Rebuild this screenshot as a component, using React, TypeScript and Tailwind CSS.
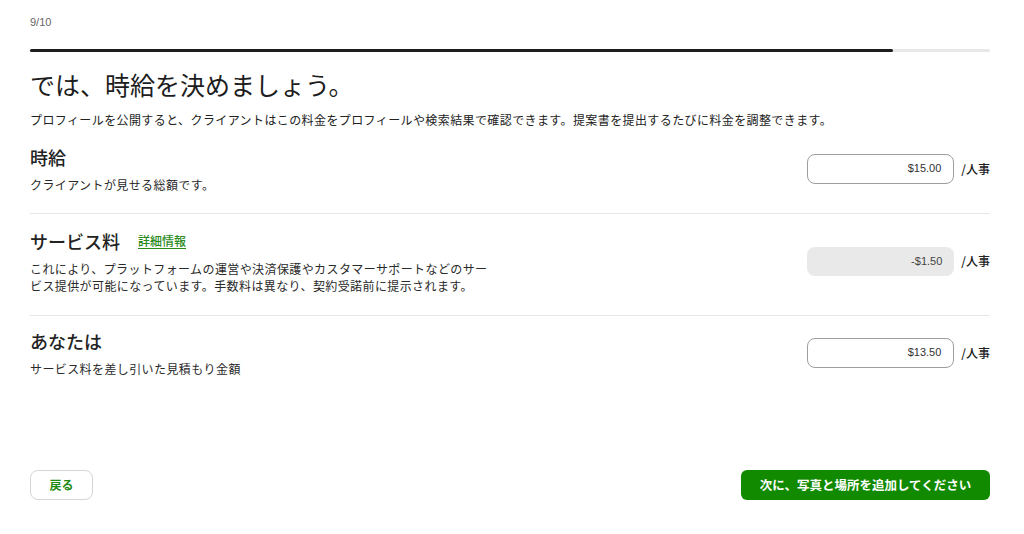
const font = {
  fontFamily: '"Noto Sans CJK JP", "Noto Sans", "Liberation Sans", sans-serif',
};
const numFont = {
  fontFamily: '"Liberation Sans", "Noto Sans CJK JP", sans-serif',
};

type RateRowProps = {
  title: string;
  desc: React.ReactNode;
  value: string;
  readOnly?: boolean;
  link?: string;
  className?: string;
};

const RateRow = ({ title, desc, value, readOnly, link, className }: RateRowProps) => {
  return (
    <div className={`flex items-center justify-between ${className ?? ""}`}>
      <div className="max-w-[462px]">
        <div className="flex items-center gap-[18px]">
          <h3 className="text-[18px] leading-[26px] font-medium text-[#222]">{title}</h3>
          {link && (
            <a href="#" className="text-[12px] font-medium text-[#2a8a1c] underline underline-offset-2">
              {link}
            </a>
          )}
        </div>
        <p className="mt-[6px] text-[12px] leading-[17px] tracking-[0.4px] text-[#2a2a2a]">{desc}</p>
      </div>
      <div className="flex items-center gap-[7px]">
        {readOnly ? (
          <div
            className="w-[147px] h-[29px] rounded-[8px] bg-[#e9e9e9] flex items-center justify-end pr-[12px] text-[11px] text-[#444]"
            style={numFont}
          >
            {value}
          </div>
        ) : (
          <div
            className="w-[147px] h-[30px] rounded-[8px] border border-[#9e9e9e] bg-white flex items-center justify-end pr-[12px] text-[11px] text-[#333]"
            style={numFont}
          >
            {value}
          </div>
        )}
        <span className="text-[12px] font-medium text-[#222]">/人事</span>
      </div>
    </div>
  );
};

export default function App() {
  return (
    <div className="w-[1024px] h-[534px] bg-white pl-[30px] pr-[34px] pt-[14px] flex flex-col" style={font}>
      <div className="text-[11px] leading-[16px] text-[#666]" style={numFont}>
        9/10
      </div>

      <div className="mt-[19px] h-[3px] w-full bg-[#e8e8e8] rounded-full">
        <div className="h-full w-[863px] bg-[#1d1d1d] rounded-full" />
      </div>

      <h1 className="mt-[15px] text-[25px] leading-[34px] font-normal text-[#1d1d1d]">
        では、時給を決めましょう。
      </h1>
      <p className="mt-[10px] text-[12px] leading-[17px] tracking-[0.4px] text-[#222]">
        プロフィールを公開すると、クライアントはこの料金をプロフィールや検索結果で確認できます。提案書を提出するたびに料金を調整できます。
      </p>

      <RateRow
        className="pt-[16px] pb-[20px] border-b border-[#e6e6e6]"
        title="時給"
        desc="クライアントが見せる総額です。"
        value="$15.00"
      />
      <RateRow
        className="pt-[14px] pb-[21px] border-b border-[#e6e6e6]"
        title="サービス料"
        link="詳細情報"
        desc="これにより、プラットフォームの運営や決済保護やカスタマーサポートなどのサービス提供が可能になっています。手数料は異なり、契約受諾前に提示されます。"
        value="-$1.50"
        readOnly
      />
      <RateRow
        className="pt-[12px]"
        title="あなたは"
        desc="サービス料を差し引いた見積もり金額"
        value="$13.50"
      />

      <div className="mt-auto mb-[34px] flex items-center justify-between">
        <button className="w-[63px] h-[30px] rounded-[8px] border border-[#d5d5d5] bg-white text-[12px] font-bold text-[#1f8a12]">
          戻る
        </button>
        <button className="w-[249px] h-[30px] rounded-[6px] bg-[#118a00] text-[12.5px] font-bold text-white">
          次に、写真と場所を追加してください
        </button>
      </div>
    </div>
  );
}
